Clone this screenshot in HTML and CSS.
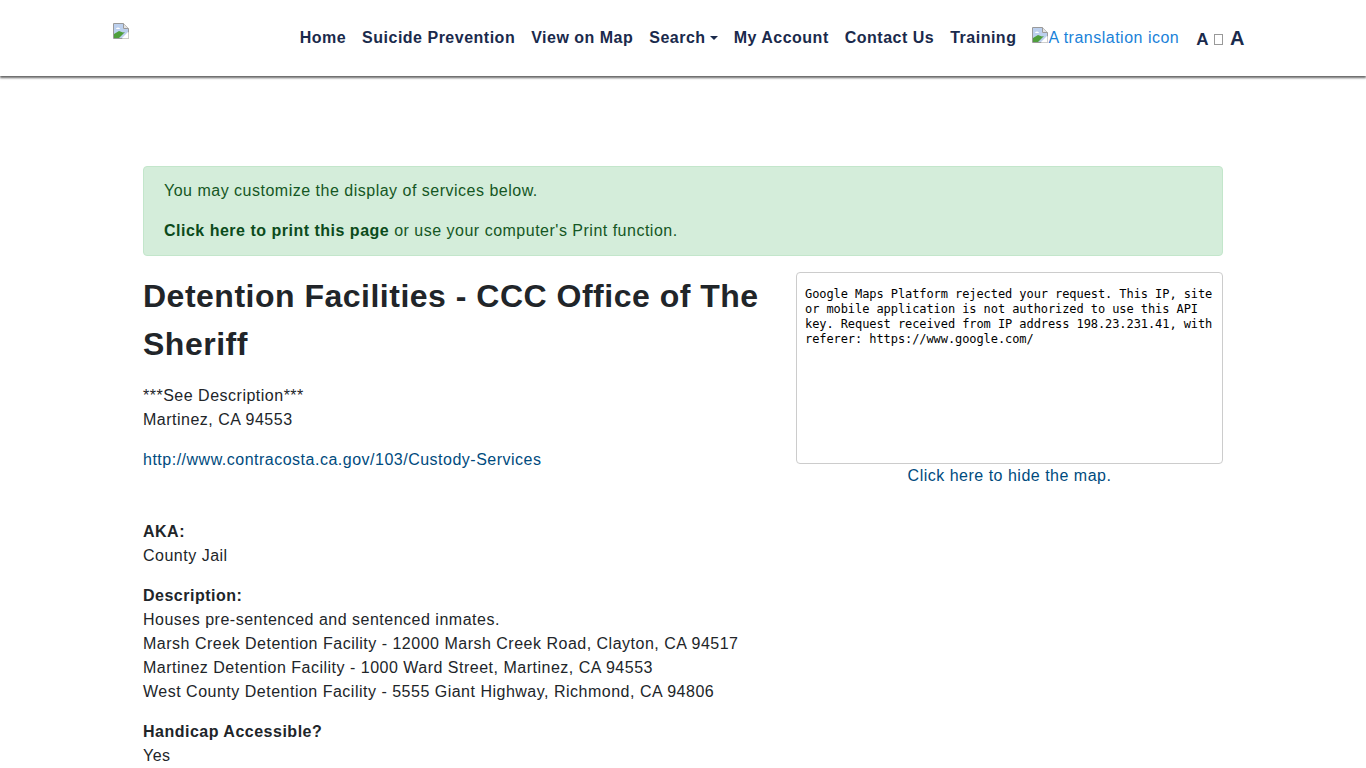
FILE: index.html
```html
<!DOCTYPE html>
<html>
  <head>
    <meta charset="utf-8">
    <meta name="viewport" content="width=device-width">
    <title>Detention Facilities - CCC Office of The Sheriff</title>
    <link rel="stylesheet" href="styles.css">
  </head>

  <body>
    <header class="topbar">
      <a class="logo" href="#">
        <svg class="broken" width="16" height="16" viewBox="0 0 16 16"><use href="#broken-img"></use></svg>
      </a>
      <nav class="nav">
        <a href="#">Home</a>
        <a href="#">Suicide Prevention</a>
        <a href="#">View on Map</a>
        <a href="#" class="dropdown">Search<span class="caret"></span></a>
        <a href="#">My Account</a>
        <a href="#">Contact Us</a>
        <a href="#">Training</a>
        <a href="#" class="translate"><svg class="broken" width="16" height="16" viewBox="0 0 16 16"><use href="#broken-img"></use></svg>A translation icon</a>
        <div class="font-size">
          <a href="#" class="small-a">A</a>
          <span class="tofu"></span>
          <a href="#" class="big-a">A</a>
        </div>
      </nav>
    </header>

    <!-- broken image icon, used for logo and translation icon -->
    <svg class="defs" width="0" height="0">
      <symbol id="broken-img" viewBox="0 0 16 16">
        <path d="M0.5 0.5H10.5L15.5 5.5V15.5H0.5Z" fill="#fff" stroke="#9a9a9a"/>
        <path d="M10.5 0.5V5.5H15.5" fill="#e4e4e4" stroke="#9a9a9a"/>
        <path d="M1 1H10V6H15V9L9 15H1Z" fill="#bcd0ee"/>
        <path d="M1 15V11L6 8L10 9.5L12 9L6 15Z" fill="#4f9f3c"/>
        <path d="M3 6a2 1.5 0 0 1 4 0Z" fill="#fff"/>
        <path d="M15.5 9L9 15.5H15.5Z" fill="#fff"/>
      </symbol>
    </svg>

    <main class="container">
      <div class="alert">
        <p>You may customize the display of services below.</p>
        <p><a href="#"><strong>Click here to print this page</strong></a> or use your computer's Print function.</p>
      </div>

      <div class="row">
        <div class="info">
          <h1>Detention Facilities - CCC Office of The Sheriff</h1>
          <p>***See Description***<br>Martinez, CA 94553</p>
          <p><a class="link" href="#">http://www.contracosta.ca.gov/103/Custody-Services</a></p>
          <div class="details">
            <p><strong>AKA:</strong><br>County Jail</p>
            <p><strong>Description:</strong><br>Houses pre-sentenced and sentenced inmates.<br>Marsh Creek Detention Facility - 12000 Marsh Creek Road, Clayton, CA 94517<br>Martinez Detention Facility - 1000 Ward Street, Martinez, CA 94553<br>West County Detention Facility - 5555 Giant Highway, Richmond, CA 94806</p>
            <p><strong>Handicap Accessible?</strong><br>Yes</p>
          </div>
        </div>

        <div class="map-col">
          <div class="map">Google Maps Platform rejected your request. This IP, site or mobile application is not authorized to use this API key. Request received from IP address 198.23.231.41, with referer: https://www.google.com/</div>
          <a class="link" href="#">Click here to hide the map.</a>
        </div>
      </div>
    </main>
  </body>
</html>
```

FILE: styles.css
```css
html {
  overflow: hidden;
  height: 768px;
}

body {
  margin: 0;
  height: 768px;
  overflow: hidden;
  background-color: #fff;
  color: #212529;
  font-family: 'Liberation Sans', Arial, sans-serif;
  font-size: 16px;
  line-height: 24px;
  letter-spacing: 0.5px;
}

a {
  text-decoration: none;
}

p {
  margin: 0 0 16px;
}

.defs {
  position: absolute;
}

.topbar {
  display: flex;
  justify-content: space-between;
  height: 76px;
  padding: 0 121px 0 113px;
  box-shadow: 0 2px 2px rgba(0, 0, 0, 0.6);
}

.logo {
  margin-top: 23px;
  height: 16px;
}

.broken {
  display: block;
  flex: none;
}

.nav {
  display: flex;
  align-items: flex-start;
  padding-top: 26px;
  gap: 16px;
}

.nav a {
  color: #1a2a4c;
  font-weight: bold;
}

.caret {
  display: inline-block;
  margin-left: 4px;
  vertical-align: 3px;
  border-top: 4px solid #1a2a4c;
  border-left: 4px solid transparent;
  border-right: 4px solid transparent;
}

.nav .translate {
  color: #1a82d9;
  font-weight: normal;
}

.translate .broken {
  display: inline-block;
  vertical-align: baseline;
}

.font-size {
  display: flex;
  align-items: baseline;
  margin-left: 1px;
}

.nav .small-a {
  margin-right: 5px;
  font-size: 17px;
}

.nav .big-a {
  margin-left: 7px;
  font-size: 20px;
}

.tofu {
  width: 7px;
  height: 9px;
  border: 1px solid #999;
}

.container {
  width: 1080px;
  margin: 0 auto;
  padding-top: 90px;
}

.alert {
  padding: 12px 20px;
  margin-bottom: 16px;
  background-color: #d4edda;
  border: 1px solid #c3e6cb;
  border-radius: 4px;
  color: #155724;
}

.alert p:last-child {
  margin-bottom: 0;
}

.alert a {
  color: #0b4b1b;
}

.row {
  display: flex;
  justify-content: space-between;
}

.info {
  width: 625px;
}

h1 {
  margin: 0 0 16px;
  font-size: 32px;
  line-height: 48px;
  font-weight: bold;
  color: #212529;
}

.link {
  color: #004b7e;
}

.details {
  margin-top: 48px;
}

.map-col {
  width: 427px;
  text-align: center;
}

.map {
  box-sizing: border-box;
  height: 192px;
  padding: 14px 8px;
  border: 1px solid #ccc;
  border-radius: 4px;
  text-align: left;
  font-family: 'DejaVu Sans Mono', monospace;
  font-size: 12px;
  line-height: 15px;
  letter-spacing: -0.08px;
  color: #000;
}
```
